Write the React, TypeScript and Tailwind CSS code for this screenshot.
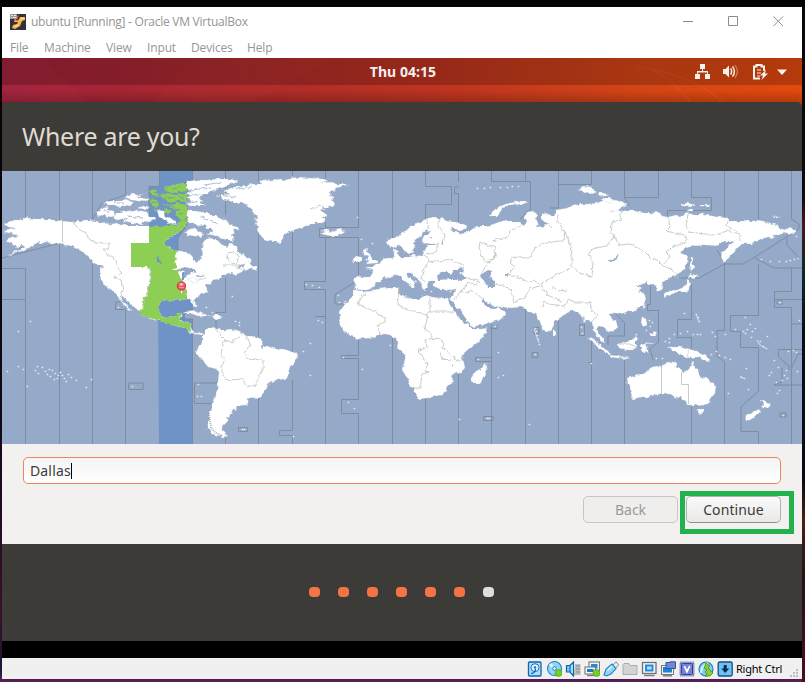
import React from "react";

const NORTH_AMERICA =
  "M4 225L7 222L12 221L17 219L22 219L26 217L30 218L35 219L41 219L47 220L54 220L62 221L72 222L76 221L80 222L85 220L90 220L92 219L95 222L101 223L106 222L110 224L117 223L120 225L126 224L130 226L137 226L141 228L149 227L156 227L163 226L168 226L172 224L177 227L179 222L183 221L186 226L182 230L179 231L177 234L173 235L170 238L167 240L165 243L166 246L170 247L173 250L178 251L184 251L188 253L193 256L193 260L196 262L199 260L202 256L203 252L201 249L203 246L205 241L203 239L207 239L211 238L215 240L219 241L221 244L225 246L227 248L229 244L232 243L234 246L237 248L239 253L244 254L247 257L250 258L252 261L247 264L240 265L236 268L241 267L244 269L242 272L235 275L232 272L227 275L223 275L219 279L213 280L210 284L206 285L208 288L208 291L203 293L197 297L194 300L196 304L197 307L194 306L191 302L190 299L187 299L182 300L177 299L173 301L167 300L161 301L159 303L158 308L160 313L163 317L167 318L173 317L176 316L177 313L182 313L181 316L179 319L183 321L190 323L191 328L192 331L196 333L202 332L203 335L196 334L191 333L187 330L185 328L180 327L173 325L167 322L160 321L153 320L147 317L142 315L142 313L138 310L133 306L128 301L124 298L122 296L120 297L123 301L127 305L131 309L132 311L127 308L124 305L121 300L118 298L115 293L110 290L107 286L104 285L101 281L100 274L100 267L104 268L101 265L97 265L93 262L90 259L86 255L83 252L79 250L75 248L71 246L67 245L60 243L54 244L50 242L45 241L42 243L38 244L40 241L36 243L32 246L28 248L22 251L16 253L7 256L14 252L20 250L25 247L22 245L18 247L13 245L11 242L6 242L8 239L11 237L18 236L17 234L9 233L4 232L8 229L16 230L15 228L8 227Z";

const GREEN_ZONE =
  "M149 227L163 226L172 224L177 227L179 222L183 221L187 225L182 230L178 233L173 235L170 238L167 240L165 244L169 247L173 250L177 251L175 256L177 259L175 262L177 265L177 268L172 270L180 270L179 275L182 280L184 284L184 288L187 290L187 299L182 300L177 299L173 301L167 300L161 301L159 303L158 308L160 313L163 317L167 318L173 317L176 316L177 313L182 313L179 317L181 321L190 323L191 332L187 330L185 328L173 325L160 321L147 317L142 315L138 310L143 309L144 305L142 302L143 297L146 297L149 287L149 282L151 277L150 269L147 267L131 267L131 243L149 243Z";

const SOUTH_AMERICA =
  "M203 334L208 328L212 329L213 327L215 329L220 327L221 330L225 330L230 329L237 330L240 331L242 334L247 336L251 336L257 337L260 340L263 343L262 347L268 346L272 348L277 349L283 349L287 350L292 352L297 353L298 357L295 362L290 367L289 370L288 376L285 379L280 380L276 380L272 382L268 384L267 388L264 392L260 397L255 399L249 397L247 399L249 402L246 405L237 406L236 410L232 409L231 412L233 414L230 415L229 418L226 417L228 421L225 424L222 427L222 430L224 433L228 436L223 437L219 436L215 435L211 433L210 429L207 428L208 423L208 420L210 416L209 412L212 408L212 403L215 396L217 390L218 381L219 372L216 369L208 367L205 363L200 358L196 353L197 347L201 345L203 341Z";

const GREENLAND =
  "M215 195L222 195L230 194L224 192L225 190L234 187L240 187L246 185L255 184L262 184L259 181L265 180L272 181L280 179L286 180L290 178L300 177L311 178L323 179L328 181L322 183L332 182L337 184L348 184L341 187L335 188L336 190L330 191L332 194L330 196L335 197L331 200L334 202L333 206L327 205L328 208L322 208L326 210L320 210L325 213L327 217L322 217L326 220L322 223L316 223L313 225L308 225L303 227L297 229L292 231L287 233L284 235L282 240L279 243L275 242L267 241L264 239L260 235L257 230L259 226L256 224L257 221L253 219L258 217L254 215L252 210L247 205L242 203L233 203L229 200L222 199L221 196Z";

const EURASIA =
  "M355 277L357 276L363 277L370 277L373 272L371 269L366 268L368 267L373 267L377 264L380 263L383 259L387 258L392 258L395 256L393 252L395 249L398 250L397 253L400 257L405 257L410 257L416 255L423 256L422 251L426 248L427 245L433 245L440 243L434 243L427 244L423 243L422 239L424 236L431 232L429 230L423 232L422 236L416 239L414 243L415 246L412 252L408 254L405 253L402 247L399 245L393 248L389 247L387 243L387 240L393 238L398 237L401 233L407 230L411 226L417 223L422 221L428 218L434 217L440 218L447 221L455 222L462 224L467 226L466 229L459 230L450 228L452 232L457 232L460 234L465 233L468 231L472 229L477 226L486 226L493 224L497 223L501 221L507 220L513 222L520 222L524 226L526 222L524 217L527 212L533 211L537 214L536 218L539 223L536 227L543 226L548 224L541 219L541 215L546 213L553 216L556 213L555 210L562 209L567 208L571 206L580 204L589 204L597 203L602 201L601 198L608 198L614 200L623 201L627 203L626 206L620 209L610 212L619 210L627 211L635 211L644 213L650 213L660 212L662 216L668 217L676 215L683 216L686 212L694 215L703 213L707 215L718 217L728 218L729 221L742 221L750 221L758 220L767 222L777 225L779 228L785 230L790 227L797 231L793 234L787 233L783 232L780 235L773 235L774 238L768 237L763 239L755 241L753 244L742 244L739 247L734 250L732 254L728 259L724 263L721 257L722 252L730 245L735 242L730 241L722 242L717 246L704 245L693 246L686 248L680 253L686 255L688 257L687 263L685 269L677 275L672 276L666 280L662 283L663 287L661 291L657 292L656 286L653 284L648 285L647 282L641 285L637 285L642 288L639 290L645 295L646 300L643 305L637 309L633 312L627 312L620 314L614 313L609 315L612 319L617 323L618 327L614 331L608 332L605 328L599 326L596 329L599 334L604 339L604 343L598 338L596 334L593 330L592 323L590 320L585 322L583 317L580 315L577 311L572 311L567 313L560 318L554 322L554 326L551 330L547 333L544 330L541 324L538 320L536 313L528 312L523 307L512 308L500 307L493 306L489 303L485 301L482 299L482 302L487 307L493 309L500 308L505 312L507 313L502 319L487 324L472 327L466 319L462 313L458 308L452 301L449 299L453 296L455 289L448 290L440 290L435 287L433 284L435 281L429 281L427 284L428 288L425 291L422 288L421 282L414 277L412 273L408 273L407 276L414 281L418 282L413 283L415 286L412 288L409 284L403 280L401 276L397 275L390 278L383 277L381 281L376 283L373 287L367 290L360 290L356 289L354 284Z";

const AFRICA =
  "M353 290L357 290L363 292L370 291L378 289L387 288L399 288L398 292L403 296L410 298L417 300L420 298L421 296L426 295L432 297L440 298L448 298L449 303L452 308L457 313L459 318L463 322L468 325L471 328L480 328L488 327L487 331L483 338L477 343L470 348L465 352L462 358L464 362L465 368L461 372L453 375L452 377L454 382L448 385L447 390L442 395L437 396L428 398L418 399L415 393L414 388L410 386L408 379L402 370L403 365L406 360L404 354L397 348L398 343L396 339L390 335L384 334L378 335L371 338L358 339L351 336L345 332L342 328L338 323L340 318L339 312L343 307L346 303L348 300L353 297L353 293Z";

const AUSTRALIA =
  "M627 378L631 377L640 375L645 373L648 370L652 367L657 366L661 368L663 364L667 363L666 361L672 363L678 363L676 367L683 372L688 371L690 367L692 361L695 368L698 369L699 375L705 378L711 382L716 387L715 393L711 399L708 404L703 405L700 407L695 405L687 405L686 401L682 400L681 396L677 399L672 395L665 393L655 395L647 397L641 397L633 399L631 398L632 393L628 384Z";

// Larger and mid-sized islands
const ISLANDS = [
  "M188 210L196 210L200 212L207 212L210 214L217 216L222 219L227 221L230 225L237 227L239 230L233 230L235 233L231 235L233 238L232 242L228 239L222 238L217 236L212 235L206 234L212 232L214 229L207 229L206 225L199 226L196 223L189 223L187 219L189 217L186 214Z",
  "M186 182L195 180L205 180L220 179L231 179L239 182L231 184L225 187L219 189L211 191L208 194L202 194L199 198L203 200L200 203L206 206L196 206L190 206L186 203L192 201L186 198L192 196L187 193L192 191L186 189Z",
  "M96 212L102 208L109 207L107 210L114 211L115 216L110 217L104 215L98 216Z",
  "M116 213L123 212L120 210L129 212L137 210L147 212L149 216L155 217L156 220L149 222L142 221L143 225L132 223L123 221L127 218L118 220L113 219Z",
  "M103 203L111 201L121 201L126 199L134 203L130 206L124 205L119 207L114 205L108 205Z",
  "M125 197L133 193L137 195L144 194L137 197L148 199L145 202L138 201L131 200Z",
  "M138 208L143 206L149 208L146 210Z",
  "M188 230L193 228L198 231L203 233L201 237L194 236L188 235L185 233Z",
  "M157 210L164 211L166 216L175 221L177 225L169 223L163 219L159 217Z",
  "M321 230L327 230L332 232L341 229L345 232L339 236L331 236L326 235L320 234L325 232Z",
  "M243 269L246 262L249 261L251 265L256 267L257 270L251 268L247 270Z",
  "M187 280L194 277L198 280L207 278L201 279L194 283Z",
  "M353 259L356 256L361 257L361 261L354 262Z",
  "M363 250L368 248L367 252L370 254L372 259L378 261L378 263L366 264L370 261L366 260L369 257L364 255Z",
  "M410 256L415 253L416 257Z",
  "M490 216L494 210L500 206L510 203L520 201L528 201L524 204L511 205L503 208L500 212L498 217L492 217Z",
  "M578 189L584 186L592 187L591 189L597 192L592 194L586 193L582 191Z",
  "M597 193L604 193L609 195L601 197Z",
  "M601 199L609 198L614 201L606 203Z",
  "M680 204L687 203L696 205L690 207L682 206Z",
  "M687 209L693 209L693 211L688 211Z",
  "M700 205L710 205L709 207L700 206Z",
  "M772 217L779 216L777 218Z",
  "M691 257L693 258L692 262L695 268L691 272L690 265Z",
  "M689 276L690 273L698 276L694 279L691 277L688 280Z",
  "M664 295L670 291L677 290L683 288L687 284L687 280L690 282L689 289L685 292L678 292L672 294L667 296L665 298Z",
  "M471 378L476 371L481 369L486 363L487 367L484 377L480 384L474 384L471 381Z",
  "M553 329L556 332L556 336L553 336Z",
  "M587 337L592 338L599 344L606 349L611 354L609 355L600 349L593 342Z",
  "M610 355L620 356L630 358L628 359L617 358L610 357Z",
  "M617 344L622 343L630 341L635 335L638 339L636 341L636 347L632 350L626 350L619 348Z",
  "M640 345L650 343L654 343L645 345L648 347L646 349L650 353L645 351L643 353L641 350Z",
  "M642 317L646 319L647 324L644 326L641 323Z",
  "M649 334L655 331L656 336L651 336Z",
  "M643 306L646 302L643 310Z",
  "M667 346L673 347L680 347L689 349L697 351L706 356L711 361L704 360L698 357L690 358L686 358L680 354L672 350Z",
  "M696 409L704 409L701 414L698 413Z",
  "M760 399L767 403L771 404L766 409L761 407L764 404Z",
  "M758 409L761 411L754 418L746 420L745 417L750 414Z",
  "M183 313L188 311L198 312L204 314L210 317L199 316L190 313Z",
  "M210 316L217 315L223 317L216 319Z",
  "M192 299L195 303L196 307L194 306Z",
];

// Green islands of the selected zone in the Canadian arctic
const GREEN_ISLANDS =
  "M164 188L172 185L180 183L187 183L187 191L180 192L172 193L166 191ZM149 191L158 189L155 192L160 196L152 195ZM160 195L168 193L176 195L187 193L187 202L178 201L170 203L163 199ZM149 199L158 200L159 207L152 206ZM162 204L172 205L177 203L187 205L187 210L181 210L171 208ZM176 211L187 209L187 217L183 220L178 217L175 214ZM165 208L171 211L169 214L164 212ZM179 221L187 219L187 226ZM151 209L158 209L157 211Z";

// Inland seas and large lakes
const WATER =
  "M438 280L437 276L441 272L447 272L451 275L454 270L462 267L464 271L460 273L467 278L460 281L452 279ZM482 274L488 270L492 271L490 276L495 281L495 287L487 287L485 282L480 278ZM607 262L615 258L619 253L617 259L612 262ZM441 243L444 242L444 244ZM440 352L442 356L446 360L443 358ZM452 362L453 367L452 366ZM505 274L508 274L508 277L505 276ZM427 236L432 237L431 239ZM176 270L185 267L193 269L198 273L191 272L186 277L183 279L182 274L185 271ZM195 276L200 275L206 276L200 277ZM260 346L267 346L262 348Z";

const ZONE_LINES =
  "M25.5 171V219M25.5 268.5H2M25.5 268.5V299.5H2M25.5 299.5V444M59.5 171V220M59.5 245V444M92.5 171V219L102 203L125.5 195V171M92.5 264V444M115.5 302V309.5H125.5V444M115.5 302H120M2 258L60 243M159.5 171V186.5H149V211M192.5 171V182M225.5 171V179M225.5 184V215M225.5 278V312.5H216V327M225.5 438V444M192.5 310.5V309.5H185V313.5M181 319H192.5V444M187 183V225L178 238V250M258.5 171V181M258.5 230V337M258.5 398V444M292.5 171V178M292.5 232V353M292.5 380V430.5H279.5V435.5H292.5V444M325.5 171V179M325.5 222V228.5H319.5V237.5H358.5M325.5 237.5V281.5H304.5V289.5H325.5V444M358.5 171V227.5H325.5M358.5 237.5V280L335 294.5V304H345M358.5 339V355.5H341.5V358.5H358.5V399.5H341.5V413.5H358.5V444M392.5 171V238M392.5 338V444M425.5 171V186.5H451.5V204.5H425.5V220M425.5 398V444M458.5 171V182M458.5 187H454.5V193.5H458.5V222M458.5 372V444M491.5 171V181.5H530.5V209L520 219M491.5 324V328.5H497M497 328V325M491.5 328V361.5H475.5V357.5H491.5M491.5 361.5V444M525.5 171V181M525.5 309V444M558.5 171V208H550M591.5 171V184.5H558.5M558.5 320V444M591.5 338V444M624.5 171V197.5H658.5V171M624.5 197.5L629.5 206M624.5 336V323L614 312M624.5 336H608V345M624.5 357V444M658.5 310V342L650 349L653 360M658.5 310.5H647.5V304.5H650.5V280M691.5 171V197.5H711.5V210.5H667.5V217M691.5 284V319.5H677.5V337.5H691.5V348M691.5 407V444M724.5 171V218M724.5 264V330.5H717V356L724.5 362V444M724.5 264L699 278L679 278M717 250L725 264L743 264L755 257L799 229L799 224L791.5 219V171M755 258L774 268H802M787 238V245L800 259M758.5 171V220M758.5 264V315.5H730.5V331.5H740.5V347.5H758.5V391L741 407V431.5H758.5V444M791.5 268V291.5H774.5V307.5H791.5V324H802M791.5 324V444M774.5 299.5H802M802 349.5H778.5V357L789 366V370M782 368V382L774 385H802M791.5 368L798 354H802M128.5 383H143V389.5H128.5ZM194.5 383H219M194.5 383V403.5H212M238.5 427.5H247.5V431.5H238.5ZM315.5 316.5H325M483.5 416.5H493V420.5H483.5ZM534 327.5H539V334H534ZM532 352.5H538V357.5H532ZM579.5 324.5H584.5V335.5H579.5ZM588.5 362.5H591.5M780 413H786V417H780ZM777 301H782V304H777Z";

const BORDERS =
  "M73 222L77 227L80 230L86 233L90 240L96 243H109V249H103L107 254L113 258L116 262L119 270L122 273L114 277L121 280L123 290L121 296M150 269L151 277L149 287L145 298L143 308M215 328L220 335L225 340L223 345L221 354L225 360L221 367L224 379L228 380L242 379L248 386L254 386L258 378L263 370L263 360L247 359L245 352L250 345L247 336M225 340L233 343L234 339L240 337M227 253L234 252L239 256L236 265L228 261L227 254M223 265L240 265L240 270M324 210L320 205L311 209M357 303L367 291M357 303L385 317L385 322L378 325L380 335M399 288L398 304L405 309L428 315L428 312L457 312M430 297L430 312M428 315L425 328L433 338L442 339L443 348L455 359L464 362M425 340L434 338M425 340L427 347L418 351L422 355L425 363L428 363L425 371L430 372L422 374L420 388L414 388M440 352L442 359L450 360M425 256L429 259L426 267L421 276L424 282M425 253L430 254L437 250L437 244M426 218L429 229M440 219L438 224L445 236L443 243M427 261L440 262L448 259L464 265L463 273M480 242L487 245L495 247L495 258L486 262L481 256L479 249ZM496 252L493 260L486 265L482 273M492 241L508 237L510 231L521 226M557 214L558 222L565 232L563 241L546 242L535 248L530 258L512 257L510 263L515 267L508 274L521 278L528 282L535 281L541 285L551 278L564 271L570 268M548 224L552 228M511 291L507 287L499 285L493 284M511 291L514 302L525 297L530 289L539 286M467 278L480 282L476 285L468 282L461 292L454 300M461 292L473 291L483 299M552 286L558 291L567 290M567 300L564 306L556 305L549 304L544 301L542 307M567 300L577 303L590 303L592 311L597 315L592 322M541 285L547 295L562 301M563 229L569 240L572 255L572 266L580 273L592 277L593 262L588 254L594 248L607 246L614 236L619 245L630 244L643 250L651 258L657 260L663 266L671 269L679 278M622 209L620 220L612 222L611 233L618 239M668 217L670 227L666 231L685 235L686 242L671 248L667 252L669 258L664 264M690 213L686 225L688 232L714 235L727 231L740 235L740 241M728 220L727 226L738 232M688 348L688 358M636 347L630 344L619 344";

const STRAIGHT_BORDERS = "M62.5 221V242M661.5 366V394M681.5 372V384.5H688.5V404";

// Tiny islands: x, y pairs
const SPECKS = [
  [7, 371], [18, 366], [23, 369], [37, 366], [42, 367], [49, 369], [55, 373], [62, 375], [68, 374], [50, 376], [57, 378], [66, 381], [38, 373], [91, 379], [86, 387], [27, 386], [30, 321], [18, 331],
  [45, 371], [52, 370], [58, 375], [64, 378], [71, 377], [60, 372], [47, 374], [54, 379], [76, 380], [35, 370],
  [118, 307], [132, 386], [198, 384], [197, 396], [201, 396], [242, 429], [244, 429], [293, 436], [303, 351], [310, 343], [310, 375], [232, 296], [306, 284], [312, 285], [319, 287], [338, 295], [339, 302], [345, 301], [344, 303], [322, 322], [318, 320],
  [235, 321], [239, 322], [239, 325], [206, 307], [212, 312], [343, 357], [362, 369], [348, 402], [354, 408], [390, 345], [450, 291], [431, 291], [459, 419], [478, 359], [498, 352], [498, 377], [503, 375], [487, 418], [489, 418], [529, 424], [495, 326],
  [535, 328], [536, 331], [537, 335], [538, 339], [539, 344], [535, 354], [581, 327], [582, 333], [591, 363], [635, 289], [636, 334],
  [684, 313], [696, 314], [698, 317], [699, 321], [680, 333], [674, 334], [687, 331], [693, 334], [700, 334], [712, 332], [715, 336], [669, 338], [669, 342], [735, 329], [743, 331], [745, 317], [747, 329], [745, 333], [750, 324], [752, 331], [751, 337], [755, 328], [760, 341], [763, 346], [766, 348], [767, 336], [697, 334], [725, 334],
  [774, 360], [771, 372], [769, 375], [778, 367], [784, 375], [787, 378], [786, 370], [782, 380], [776, 382], [788, 351], [793, 350], [796, 352], [779, 390], [777, 393], [728, 393], [748, 389], [746, 368], [741, 377], [744, 378], [799, 320], [797, 371], [779, 302], [780, 302], [783, 415],
  [761, 259], [770, 261], [779, 261], [786, 261], [790, 260], [794, 259], [798, 258], [796, 236], [477, 188], [484, 188], [490, 187], [500, 187], [507, 187], [512, 186], [518, 186], [357, 217], [372, 243], [361, 239], [646, 330], [650, 326], [652, 322], [649, 320],
  [670, 347], [665, 341], [656, 358], [662, 358], [711, 354], [716, 351], [719, 355], [725, 357], [730, 359],
];

function WorldMap() {
  return (
    <svg className="block h-[273px] w-[800px] shrink-0" viewBox="2 171 800 273" aria-label="World time zones">
      <defs>
        <filter id="coast" x="2" y="171" width="800" height="273" filterUnits="userSpaceOnUse" colorInterpolationFilters="sRGB">
          <feTurbulence type="fractalNoise" baseFrequency="0.22" numOctaves="2" seed="4" result="noise" />
          <feDisplacementMap in="SourceGraphic" in2="noise" scale="4" xChannelSelector="R" yChannelSelector="G" />
        </filter>
      </defs>
      <rect x="2" y="171" width="800" height="273" fill="#95a9c9" />
      <path d="M159 171H193V182H187V226L178 238V251H149V186H159ZM158 299H193V310H185V319H193V444H159Z" fill="#6f93c7" />
      <rect x="175" y="265" width="11" height="18" fill="#7d98c6" />
      <path d={ZONE_LINES} fill="none" stroke="#7c8798" strokeWidth="1" strokeOpacity="0.85" />
      <g filter="url(#coast)">
        <g fill="#fff" stroke="#b9c3cf" strokeWidth="0.3">
          <path d={NORTH_AMERICA} />
          <path d={SOUTH_AMERICA} />
          <path d={GREENLAND} />
          <path d={EURASIA} />
          <path d={AFRICA} />
          <path d={AUSTRALIA} />
          {ISLANDS.map((d) => (
            <path key={d} d={d} />
          ))}
        </g>
        <path d={GREEN_ZONE} fill="#8dce55" />
        <path d={GREEN_ISLANDS} fill="#8dce55" />
        <path d={WATER} fill="#95a9c9" />
        <path d={BORDERS} fill="none" stroke="#b9c1bd" strokeWidth="0.8" />
        <path d="M156 257L159 258L162 263L158 262ZM182 274L184 273L184 281L182 280Z" fill="#6f93c7" />
        <path d="M190 190L210 188M188 196L200 194M190 202L198 203M205 185L222 182M236 189L252 187M225 196L236 197M104 210L110 213M128 216L142 218M114 203L124 203M201 217L208 219M210 221L218 224" fill="none" stroke="#95a9c9" strokeWidth="0.8" />
        <path d="M160 191L168 189M172 189L180 187M164 197L174 198M178 197L187 199M151 203L156 202M168 206L176 207M179 213L184 215" fill="none" stroke="#6f93c7" strokeWidth="0.9" />
      </g>
      <path d="M149 227V243H131V267H144V262H153V232H149Z" fill="#8dce55" />
      <path d="M130 226H149V243H131V267H130Z" fill="#fff" />
      <path d={STRAIGHT_BORDERS} fill="none" stroke="#b9c1bd" strokeWidth="0.8" />
      <path d="M77 249L84 256L90 260M209 413L211 428L216 433L223 436M676 397L680 400" fill="none" stroke="#99aeb3" strokeWidth="1.6" strokeDasharray="1 1" />
      {SPECKS.map(([x, y]) => (
        <rect key={`${x}-${y}`} x={x - 0.4} y={y - 0.2} width="1.6" height="1.4" fill="#e9eef2" />
      ))}
      <path d="M757 340L760 345L765 348M696 314L699 322M740 376L745 379M534 329L539 343" fill="none" stroke="#dbe3ea" strokeWidth="1" />
      <g>
        <path d="M180.5 289H182.7V293.5H180.5Z" fill="#f4f4f4" stroke="#9a9a8a" strokeWidth="0.5" />
        <circle cx="181.5" cy="286" r="4.1" fill="#ee5c60" stroke="#c0292e" strokeWidth="0.9" />
        <ellipse cx="181.3" cy="284.3" rx="2.1" ry="1.4" fill="#fbb9b9" />
        <path d="M179 287.5H184" stroke="#f9a0a0" strokeWidth="0.8" />
      </g>
    </svg>
  );
}

function StatusIcon({ children }: { children: React.ReactNode }) {
  return (
    <svg className="h-4 w-4 shrink-0" viewBox="0 0 16 16">
      {children}
    </svg>
  );
}

function StatusBar() {
  return (
    <div className="flex h-[21px] items-center bg-[#f0f0f0] pl-[525px]">
      <div className="flex gap-[3px]">
        <StatusIcon>
          <rect x="1.5" y="1" width="12.5" height="14" rx="1" fill="#a9dcff" stroke="#1265ab" strokeWidth="1.3" />
          <circle cx="8" cy="6.7" r="4" fill="#e9f7ff" stroke="#1872bd" />
          <circle cx="8" cy="6.5" r="1.3" fill="#1872bd" />
          <path d="M4 12.5Q8 12.5 8.5 8" fill="none" stroke="#1265ab" strokeWidth="1.4" />
        </StatusIcon>
        <StatusIcon>
          <circle cx="8.5" cy="7.5" r="7" fill="#8fd5fa" stroke="#2485c5" strokeWidth="1.1" />
          <path d="M4 3L7 6" stroke="#d8f4ff" strokeWidth="3" />
          <circle cx="8.5" cy="7.5" r="1.8" fill="#e6f8ff" stroke="#2485c5" />
          <circle cx="12.5" cy="12" r="3.5" fill="#72d01e" stroke="#4e9614" strokeWidth="0.6" />
        </StatusIcon>
        <StatusIcon>
          <path d="M10 3H15.5V14H9Z" fill="#b9bdc0" />
          <path d="M11 5H15M11 8H15M11 11H15" stroke="#858b90" />
          <path d="M1.5 4.5H5L8.5 1V15L5 11H1.5Z" fill="#72c8f7" stroke="#14679e" strokeWidth="1.2" />
          <path d="M5 5V11" stroke="#14679e" />
          <path d="M7 4V12" stroke="#c9edff" strokeWidth="1.2" />
        </StatusIcon>
        <StatusIcon>
          <rect x="5" y="1" width="10.5" height="8.5" fill="#f3f5f6" stroke="#777" strokeWidth="1.1" />
          <rect x="7" y="3" width="6.5" height="4.5" fill="#248bd7" />
          <rect x="1" y="6" width="10.5" height="7" fill="#f3f5f6" stroke="#777" strokeWidth="1.1" />
          <rect x="3" y="8" width="6.5" height="3" fill="#147cc9" />
          <path d="M3 14.5H10" stroke="#777" strokeWidth="1.3" />
          <circle cx="12.5" cy="12" r="3.5" fill="#72d01e" stroke="#4e9614" strokeWidth="0.6" />
        </StatusIcon>
        <StatusIcon>
          <path d="M10 4L13 .8L15.7 4L12.5 7" fill="#eee" stroke="#858585" />
          <path d="M1 14L3 8L9 3L13 7.5L8 13L3.5 15Z" fill="#8bd4fa" stroke="#257fb8" strokeWidth="1.1" />
          <path d="M4.5 9.5L9 5M12 3.5H13" stroke="#d8f4ff" strokeWidth="1.6" />
        </StatusIcon>
        <StatusIcon>
          <path d="M1 13.5V3.5L2 2.5H7L8 4.5H15V13.5Z" fill="#d3d3d3" stroke="#acacac" />
        </StatusIcon>
        <StatusIcon>
          <rect x="1.5" y="1.5" width="13.5" height="11" fill="#f4f4f4" stroke="#707070" strokeWidth="1.3" />
          <rect x="4" y="3.5" width="8.5" height="7" fill="#238cde" />
          <rect x="6" y="5.5" width="4.5" height="3" fill="#b1e1ff" />
          <path d="M3 14.5H13.5" stroke="#777" strokeWidth="1.4" />
        </StatusIcon>
        <StatusIcon>
          <rect x="1.5" y="4.5" width="12" height="9" fill="#f4f4f4" stroke="#777" />
          <rect x="3" y="6" width="9" height="5.5" fill="#1785da" />
          <path d="M6 1.5H10V.8H15.5V7.5H6Z" fill="#6f86d4" stroke="#3851a2" />
          <path d="M3 14.8H12" stroke="#777" strokeWidth="1.4" />
        </StatusIcon>
        <StatusIcon>
          <rect x="1.5" y="1.5" width="13" height="13" fill="none" stroke="#3448a8" strokeWidth="2" strokeDasharray="1 1" />
          <rect x="2.5" y="2.5" width="11" height="11" rx="1" fill="#7483d8" stroke="#31419b" />
          <path d="M5.3 5L8 10.7L10.7 5" fill="none" stroke="#fff" strokeWidth="1.7" />
        </StatusIcon>
        <StatusIcon>
          <circle cx="8" cy="8" r="7" fill="#7fcaf6" stroke="#1e78b6" strokeWidth="1.1" />
          <path d="M3 12C3 7 6 4 10 2" fill="none" stroke="#d1f1ff" strokeWidth="2" />
          <path d="M8 2L12 5L10 7L15 12L12 15L7 15L9 13L7 11L9 9L6 7Z" fill="#87d032" stroke="#4e8b16" strokeWidth="0.8" />
        </StatusIcon>
        <StatusIcon>
          <rect x="1.2" y="1" width="14" height="14" rx="1.5" fill="#6cc2f5" stroke="#14517b" strokeWidth="1.3" />
          <path d="M8.2 4V8" stroke="#082d51" strokeWidth="3" />
          <path d="M4.2 7.5H12.2L8.2 12Z" fill="#082d51" />
        </StatusIcon>
      </div>
      <span className="ml-[3px] w-[47px] whitespace-nowrap font-['Noto_Sans',sans-serif] text-[11px] leading-4 tracking-[-0.22px] text-black">
        Right Ctrl
      </span>
      <svg className="ml-[6px] mt-2 h-[10px] w-[10px]" viewBox="0 0 10 10">
        <path d="M7 1H9V3H7ZM4 4H6V6H4ZM7 4H9V6H7ZM1 7H3V9H1ZM4 7H6V9H4ZM7 7H9V9H7Z" fill="#bdbdbd" />
      </svg>
    </div>
  );
}

function TitleBar() {
  return (
    <div className="flex h-[29px] items-center pl-2">
      <svg className="h-4 w-4" viewBox="0 0 16 16">
        <rect width="16" height="16" fill="#30323d" />
        <path d="M5 5C7 8 9 6 10 3L15 3V6L12 7L10 12L5 15L2 14L3 11L7 10L8 8L4 8Z" fill="#fbb64b" />
        <path d="M5 3L9 1L7.5 5L4 7Z" fill="#ee572a" />
        <path d="M10.5 5L14 4M5 12.5L8 11" stroke="#ffe19a" strokeWidth="1.3" />
        <path d="M0 0H7V5H0Z" fill="#999" />
        <path d="M1 1H3V2H1ZM4 1H6V2H4ZM1 3H2V4H1ZM3 3H6V4H3Z" fill="#e9e9e9" />
      </svg>
      <span className="ml-[5px] text-[12px] tracking-[-0.26px] text-[#949494]">ubuntu [Running] - Oracle VM VirtualBox</span>
      <svg className="ml-auto mr-[18px] h-3 w-[102px]" viewBox="0 0 102 12" fill="none" stroke="#8c8c8c">
        <path d="M1 5.5H11M46.5 .5H55.5V9.5H46.5ZM91.5 0.5L101 10M101 .5L91.5 10" />
      </svg>
    </div>
  );
}

function MenuBar() {
  return (
    <div className="flex h-[22px] items-center gap-4 pl-2 pt-[2px] text-[12px] tracking-[-0.14px] text-[#969696]">
      <span className="w-[18px]">File</span>
      <span className="w-[46px]">Machine</span>
      <span className="w-[25px]">View</span>
      <span className="w-[28px]">Input</span>
      <span className="w-[40px]">Devices</span>
      <span>Help</span>
    </div>
  );
}

function TopPanel() {
  return (
    <div className="grid h-[27px] grid-cols-[1fr_auto_1fr] items-center bg-black/20">
      <span />
      <span className="pb-px pl-[2px] font-['Noto_Sans',sans-serif] text-[14px] font-bold tracking-[0.05px] text-[#f3eeee]">Thu 04:15</span>
      <svg className="mr-[14px] h-[18px] w-[94px] justify-self-end" viewBox="0 0 94 18" fill="#f5f1ed">
        <path d="M6 1H11V6H9V8H14V11H16V16H11V11H13V9.5H4V11H6V16H1V11H3V8H8V6H6Z" />
        <path d="M29 6H31.5L35 2.5V14.5L31.5 11H29Z" />
        <path d="M36.5 5.5C38 7 38 10 36.5 11.5M38.5 3.5C41 6 41 11 38.5 13.5" fill="none" stroke="#f5f1ed" strokeWidth="1.5" />
        <path d="M41 2C44 6 44 11 41 15" fill="none" stroke="#d17b5c" strokeWidth="1.2" />
        <path d="M66 15.5H60V3.5H62.5V2H67.5V3.5H70V8" fill="none" stroke="#f5f1ed" strokeWidth="2" />
        <path d="M63 7H67M63 10H67M63 13H66" stroke="#f5f1ed" />
        <path d="M72 7L66 12.5H69L67.5 17L74 10.5H71Z" />
        <path d="M83 6.5H93L88 12Z" />
      </svg>
    </div>
  );
}

const steps = [0, 1, 2, 3, 4, 5, 6];

export default function App() {
  return (
    <div className="flex h-[682px] w-[805px] overflow-hidden bg-[linear-gradient(180deg,#050305_0%,#080408_30%,#14091a_65%,#3b1028_90%,#19163a_98%,#5a1f5c_100%)] pl-[2px] pt-[7px] font-['Open_Sans',sans-serif]">
      <div className="flex h-[672px] w-[800px] shrink-0 flex-col bg-white">
        <TitleBar />
        <MenuBar />
        <div className="relative flex h-[44px] flex-col overflow-hidden bg-[linear-gradient(90deg,#a0213d_0%,#ad2a2b_30%,#bd3420_55%,#d44515_80%,#e2490e_100%)]">
          <svg className="absolute inset-0 h-[44px] w-[800px]" viewBox="0 0 800 44">
            <path d="M0 0H40L85 44H0ZM195 0H330L250 44H150Z" fill="#d04b48" fillOpacity="0.08" />
            <path d="M635 8C675 16 700 25 720 44M650 12Q675 25 688 44" fill="none" stroke="#ec7745" strokeOpacity="0.25" />
          </svg>
          <div className="relative">
            <TopPanel />
          </div>
          <div className="mt-auto h-3 bg-gradient-to-b from-transparent to-black/20" />
        </div>
        <div className="bg-[linear-gradient(90deg,#801a31_0%,#a03018_50%,#b53a0b_100%)]">
          <div className="flex h-[69px] items-center rounded-t-[5px] bg-[#3d3b37] pl-[20px] font-['Noto_Sans',sans-serif] text-[25px] tracking-[-0.3px] text-[#dfdbd2]">
            Where are you?
          </div>
        </div>
        <WorldMap />
        <div className="h-[100px] bg-[#f2f1f0] px-[21px] pt-[13px] font-['Noto_Sans',sans-serif]">
          <div className="flex h-[27px] items-center rounded-[5px] border border-[#e8875f] bg-gradient-to-b from-[#f4f4f4] to-white pl-[6px] text-[14px] text-[#3d3b37]">
            <span className="tracking-[0.15px]">Dallas</span>
            <span className="h-4 w-px bg-black" />
          </div>
          <div className="mt-[7px] flex justify-end">
            <div className="mt-[5px] flex h-[27px] w-[95px] items-center justify-center rounded-[5px] border border-[#c7c6c4] bg-[#efeeed] text-[14px] text-[#9b9997]">
              Back
            </div>
            <div className="-mr-[13px] ml-[2px] flex h-[43px] w-[114px] border-[5px] border-[#22b14c] pl-px">
              <div className="flex h-[27px] w-[95px] items-center justify-center rounded-[5px] border border-[#b3b1ae] border-b-[#8f8e8b] bg-gradient-to-b from-[#fafafa] to-[#e9e8e7] text-[14px] tracking-[0.1px] text-[#3d3b37]">
                Continue
              </div>
            </div>
          </div>
        </div>
        <div className="flex h-[97px] items-center justify-center gap-[18px] bg-[#3d3b37] pb-[2px] pr-[2px]">
          {steps.map((step) => (
            <span key={step} className={step === 6 ? "h-[10px] w-[11px] rounded-[4px] bg-[#dededc]" : "h-[10px] w-[11px] rounded-[4px] bg-[#f37444]"} />
          ))}
        </div>
        <div className="h-[17px] bg-black" />
        <StatusBar />
      </div>
      <div className="h-[675px] w-[3px] bg-[linear-gradient(180deg,#0b0707_0%,#0d0a0c_28%,#4a1418_32%,#0d2a26_39%,#0a0d18_48%,#0b0a14_70%,#4a2012_76%,#2a0d18_85%,#4a0f1c_100%)]" />
    </div>
  );
}
